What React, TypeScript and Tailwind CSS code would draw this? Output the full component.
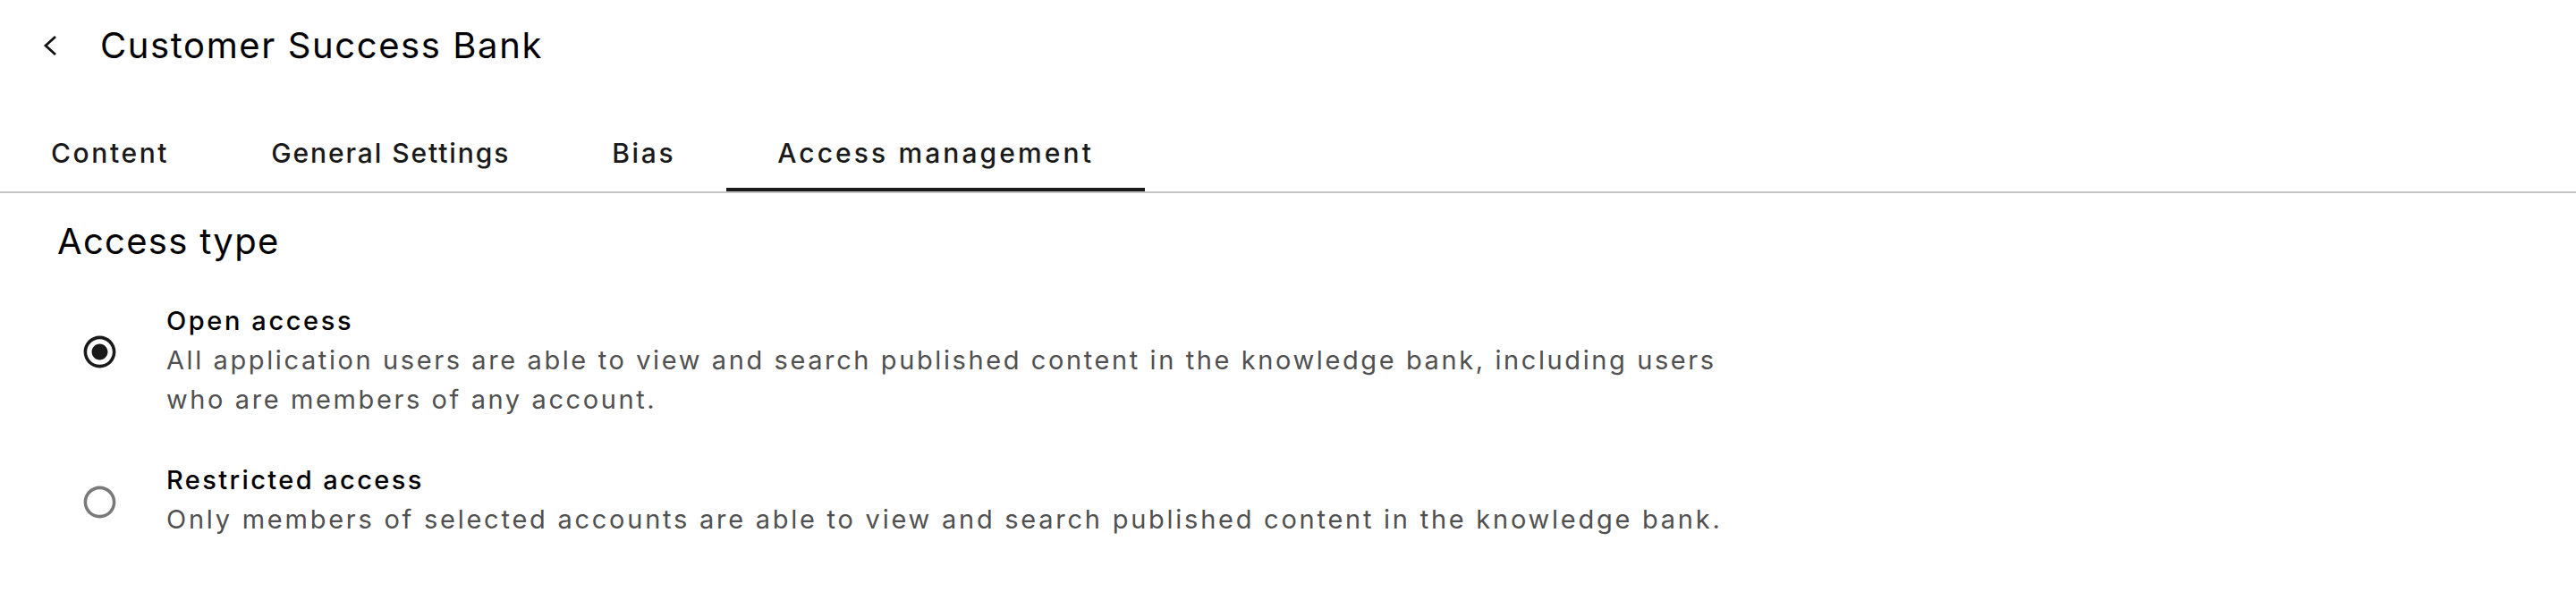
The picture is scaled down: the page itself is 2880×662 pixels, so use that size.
import React from "react";

function RadioChecked() {
  return (
    <svg viewBox="0 0 24 24" className="w-[43px] h-[43px] shrink-0" fill="#1a1a1a">
      <path d="M12 7c-2.76 0-5 2.24-5 5s2.24 5 5 5 5-2.24 5-5-2.24-5-5-5zm0-5C6.48 2 2 6.48 2 12s4.48 10 10 10 10-4.48 10-10S17.52 2 12 2zm0 18c-4.42 0-8-3.58-8-8s3.58-8 8-8 8 3.58 8 8-3.58 8-8 8z" />
    </svg>
  );
}

function RadioUnchecked() {
  return (
    <svg viewBox="0 0 24 24" className="w-[43px] h-[43px] shrink-0" fill="#7a7a7a">
      <path d="M12 2C6.48 2 2 6.48 2 12s4.48 10 10 10 10-4.48 10-10S17.52 2 12 2zm0 18c-4.42 0-8-3.58-8-8s3.58-8 8-8 8 3.58 8 8-3.58 8-8 8z" />
    </svg>
  );
}

const tabs = [
  { label: "Content", cls: "h-[86px] px-[57px] flex items-center text-[30px] font-medium tracking-[2.6px]" },
  { label: "General Settings", cls: "h-[86px] px-[57px] flex items-center text-[30px] font-medium tracking-[1.9px]" },
  { label: "Bias", cls: "h-[86px] px-[57px] flex items-center text-[30px] font-medium tracking-[2.6px]" },
  {
    label: "Access management",
    cls: "h-[86px] px-[57px] flex items-center text-[30px] font-medium tracking-[3.1px] shadow-[inset_0_-4px_0_#1a1a1a]",
  },
];

export default function App() {
  return (
    <div className="w-[2880px] h-[662px] bg-white overflow-hidden font-['Inter','Liberation_Sans',sans-serif] text-[#1a1a1a]">
      <header className="h-[102px] flex items-center pl-[48px] gap-[48px]">
        <svg viewBox="0 0 16 24" className="w-[16px] h-[24px]" fill="none" stroke="#111" strokeWidth="2.8">
          <path d="M14 2 L3 12 L14 22" />
        </svg>
        <h1 className="text-[40px] leading-[48px] font-normal text-black tracking-[1.6px]">Customer Success Bank</h1>
      </header>

      <nav className="mt-[26px] flex border-b-2 border-[#c6c6c6]">
        {tabs.map((t) => (
          <div key={t.label} className={t.cls}>
            {t.label}
          </div>
        ))}
      </nav>

      <section className="pl-[64px] pt-[30px]">
        <h2 className="text-[40px] leading-[48px] font-normal text-black tracking-[1.3px]">Access type</h2>

        <div className="mt-[43px] flex items-center pl-[26px]">
          <div className="mb-[19px]">
            <RadioChecked />
          </div>
          <div className="ml-[53px] max-w-[1765px]">
            <div className="text-[29px] leading-[44px] font-medium text-black tracking-[2.6px]">Open access</div>
            <p className="text-[29px] leading-[44px] text-[#505050] tracking-[2.6px]">
              All application users are able to view and search published content in the knowledge bank, including users who are members of any account.
            </p>
          </div>
        </div>

        <div className="mt-[46px] flex items-center pl-[26px]">
          <div className="mt-[5px]">
            <RadioUnchecked />
          </div>
          <div className="ml-[53px] max-w-[1765px]">
            <div className="text-[29px] leading-[44px] font-medium text-black tracking-[2.4px]">Restricted access</div>
            <p className="text-[29px] leading-[44px] text-[#505050] tracking-[2.75px]">
              Only members of selected accounts are able to view and search published content in the knowledge bank.
            </p>
          </div>
        </div>
      </section>
    </div>
  );
}
